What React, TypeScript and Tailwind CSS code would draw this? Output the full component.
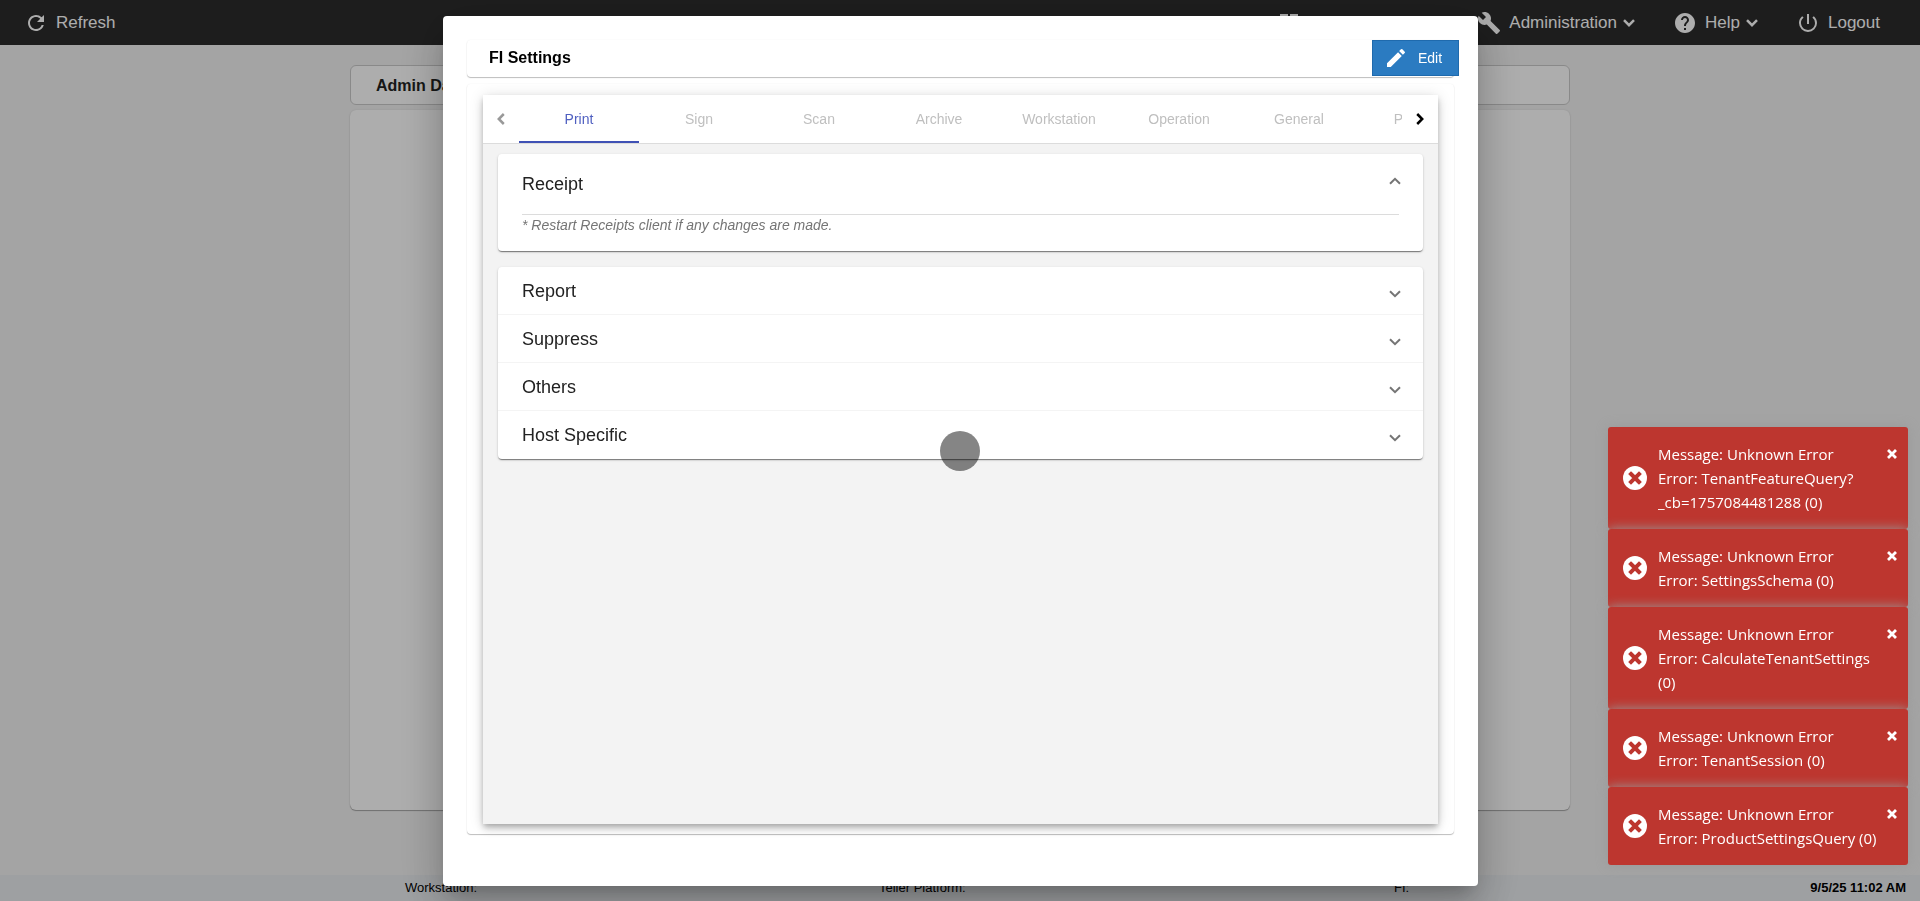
import type { ReactNode } from "react";
import { MdBuild, MdDashboard, MdEdit, MdHelp, MdPowerSettingsNew, MdRefresh } from "react-icons/md";

const tabs = ["Print", "Sign", "Scan", "Archive", "Workstation", "Operation", "General", "Process"];

const sections = ["Report", "Suppress", "Others", "Host Specific"];

const errors = [
    "TenantFeatureQuery?_cb=1757084481288 (0)",
    "SettingsSchema (0)",
    "CalculateTenantSettings (0)",
    "TenantSession (0)",
    "ProductSettingsQuery (0)",
];

function Chevron({ className }: { className: string }) {
    return (
        <svg viewBox="0 0 12 8" fill="none" stroke="currentColor" strokeWidth="2" className={`h-2 w-3 shrink-0 ${className}`}>
            <path d="M1 1.2 6 6.2 11 1.2" />
        </svg>
    );
}

function NavItem({ icon, label, menu }: { icon: ReactNode; label: string; menu?: boolean }) {
    return (
        <button type="button" className="flex items-center gap-2 px-[19px]">
            {icon}
            <span>{label}</span>
            {menu && <Chevron className="-ml-0.5 stroke-[2.5]" />}
        </button>
    );
}

function TopBar() {
    return (
        <header className="flex h-[45px] items-center justify-between bg-[#2c2c2c] pr-[21px] pl-[5px] text-[17px] leading-6 text-white">
            <NavItem icon={<MdRefresh size={24} />} label="Refresh" />
            <nav className="flex">
                <a href="#dashboard" aria-label="Dashboard" className="w-[201px] px-5">
                    <MdDashboard size={24} />
                </a>
                <NavItem icon={<MdBuild size={24} />} label="Administration" menu />
                <NavItem icon={<MdHelp size={24} />} label="Help" menu />
                <NavItem icon={<MdPowerSettingsNew size={24} />} label="Logout" />
            </nav>
        </header>
    );
}

function StatusBar() {
    return (
        <footer className="flex h-[26px] items-center bg-[#e9ecef] pr-3.5 pl-[405px] text-[13px] leading-6 text-black">
            <span className="w-[474px]">Workstation:</span>
            <span className="w-[515px]">Teller Platform:</span>
            <span>FI:</span>
            <span className="ml-auto font-bold">9/5/25 11:02 AM</span>
        </footer>
    );
}

function SettingsTabs() {
    return (
        <div className="flex h-[49px] shrink-0 border-b border-[#dcdcdc] bg-white">
            <button type="button" aria-label="Previous tabs" className="flex w-9 items-center justify-center text-[#999]">
                <Chevron className="rotate-90 stroke-[2.5]" />
            </button>
            <div role="tablist" className="flex flex-1 overflow-hidden text-sm">
                {tabs.map((tab, i) => (
                    <button
                        key={tab}
                        type="button"
                        role="tab"
                        aria-selected={i === 0}
                        className={
                            i === 0
                                ? "w-[120px] shrink-0 border-b-2 border-[#3f51b5] pt-0.5 text-[#4f5fc0]"
                                : "w-[120px] shrink-0 text-[#bfbfbf]"
                        }
                    >
                        {tab}
                    </button>
                ))}
            </div>
            <button type="button" aria-label="Next tabs" className="flex w-9 items-center justify-center text-black">
                <Chevron className="-rotate-90 stroke-[2.5]" />
            </button>
        </div>
    );
}

function SettingsDialog() {
    return (
        <div className="fixed inset-0 flex items-start justify-center bg-black/32 pt-4 pb-[15px] pl-px">
            <div
                role="dialog"
                aria-labelledby="dialog-title"
                className="flex h-full w-[1035px] max-w-full flex-col gap-[7px] rounded bg-white px-6 pt-6 pb-[52px] shadow-[0_11px_15px_-7px_rgba(0,0,0,0.2),0_24px_38px_3px_rgba(0,0,0,0.14),0_9px_46px_8px_rgba(0,0,0,0.12)]"
            >
                <div className="flex h-[37px] shrink-0 items-start justify-between rounded pl-[22px] shadow-[0_1px_1px_rgba(0,0,0,0.25),0_0_2px_rgba(0,0,0,0.06)]">
                    <h1 id="dialog-title" className="text-base leading-[35px] font-bold text-black">
                        FI Settings
                    </h1>
                    <button
                        type="button"
                        className="-mr-[5px] flex h-9 w-[87px] items-center gap-2.5 border border-[#1f6aad] bg-[#2b7bc1] pl-[11px] text-sm leading-4 text-white"
                    >
                        <MdEdit size={24} />
                        Edit
                    </button>
                </div>

                <div className="flex min-h-0 flex-1 flex-col rounded px-4 pt-[11px] pb-2.5 shadow-[0_1px_1px_rgba(0,0,0,0.25),0_0_2px_rgba(0,0,0,0.06)]">
                    <div className="flex min-h-0 flex-1 flex-col bg-[#f3f3f3] shadow-[0_3px_5px_-1px_rgba(0,0,0,0.2),0_5px_8px_rgba(0,0,0,0.14),0_1px_14px_rgba(0,0,0,0.12)]">
                        <SettingsTabs />
                        <div className="flex flex-col gap-4 px-[15px] pt-2.5 text-lg text-[#222]">
                            <section className="h-[97px] rounded bg-white px-6 shadow-[0_2px_1px_-1px_rgba(0,0,0,0.3),0_1px_1px_rgba(0,0,0,0.2),0_1px_3px_rgba(0,0,0,0.16)]">
                                <button
                                    type="button"
                                    aria-expanded="true"
                                    className="flex h-[60px] w-full items-center justify-between"
                                >
                                    Receipt
                                    <Chevron className="mb-1.5 -mr-0.5 rotate-180 text-[#757575]" />
                                </button>
                                <p className="border-t border-[#dcdcdc] text-sm leading-5 text-[#757575] italic">
                                    * Restart Receipts client if any changes are made.
                                </p>
                            </section>
                            <div className="divide-y divide-[#f4f4f4] rounded bg-white shadow-[0_2px_1px_-1px_rgba(0,0,0,0.3),0_1px_1px_rgba(0,0,0,0.2),0_1px_3px_rgba(0,0,0,0.16)]">
                                {sections.map((section) => (
                                    <button
                                        key={section}
                                        type="button"
                                        aria-expanded="false"
                                        className="flex h-12 w-full items-center justify-between px-6"
                                    >
                                        {section}
                                        <Chevron className="mt-1.5 -mr-0.5 text-[#757575]" />
                                    </button>
                                ))}
                            </div>
                        </div>
                    </div>
                </div>
            </div>
        </div>
    );
}

function Toasts() {
    return (
        <div className="fixed right-3 bottom-9 flex w-[300px] flex-col">
            {errors.map((error) => (
                <div
                    key={error}
                    role="alert"
                    className="relative flex items-center gap-[11px] rounded-[3px] bg-[#bd362f] py-[15px] pl-[15px] shadow-[0_0_12px_#999]"
                >
                    <svg viewBox="0 0 24 24" className="size-6 shrink-0">
                        <circle cx="12" cy="12" r="12" fill="#fff" />
                        <path d="M8 8 16 16 M16 8 8 16" stroke="#bd362f" strokeWidth="4" strokeLinecap="square" />
                    </svg>
                    <div className="w-[220px] font-['Open_Sans','Noto_Sans',sans-serif] text-[15px] leading-6 wrap-break-word text-white">
                        <p>Message: Unknown Error</p>
                        <p>{`Error: ${error}`}</p>
                    </div>
                    <button type="button" aria-label="Close" className="absolute top-[22px] right-[11px] text-white">
                        <svg viewBox="0 0 10 10" className="size-2.5">
                            <path d="M2 2 8 8 M8 2 2 8" stroke="currentColor" strokeWidth="2.8" strokeLinecap="square" />
                        </svg>
                    </button>
                </div>
            ))}
        </div>
    );
}

export default function App() {
    return (
        <div className="flex min-h-screen flex-col bg-[#f2f2f2] font-['Liberation_Sans',Arial,sans-serif]">
            <TopBar />
            <main className="mx-auto flex w-full max-w-[1220px] flex-1 flex-col gap-[5px] pt-5 pb-[65px]">
                <h2 className="h-10 rounded-md border border-[#cbcbcb] bg-white pl-[25px] text-base leading-[39px] font-bold text-[#222]">
                    Admin Dashboard
                </h2>
                <div className="flex-1 rounded-md bg-white shadow-[0_1px_1px_rgba(0,0,0,0.3),0_0_2px_rgba(0,0,0,0.1)]" />
            </main>
            <StatusBar />
            <SettingsDialog />
            {/* loading spinner */}
            <div className="pointer-events-none fixed inset-0 flex items-center justify-center">
                <div className="size-10 rounded-full bg-black/48" />
            </div>
            <Toasts />
        </div>
    );
}
